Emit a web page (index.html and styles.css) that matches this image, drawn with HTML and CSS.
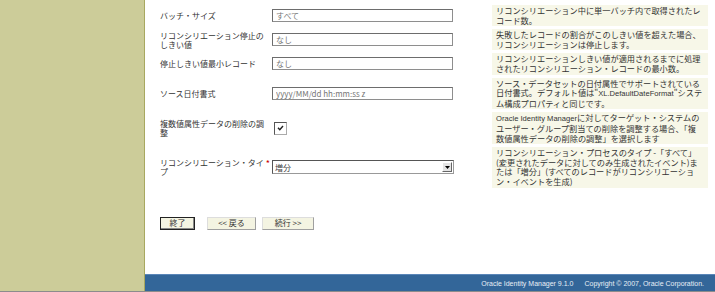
FILE: index.html
```html
<!DOCTYPE html>
<html lang="ja">
<head>
<meta charset="utf-8">
<link rel="stylesheet" href="styles.css">
</head>
<body>
<div class="page">
  <aside class="sidebar"></aside>
  <main class="main">
    <div class="form">
      <div class="label">バッチ・サイズ</div>
      <div class="mark"></div>
      <div class="field"><input class="text" type="text" value="すべて"></div>
      <div class="desc">リコンシリエーション中に単一バッチ内で取得されたレ<br>コード数。</div>

      <div class="label">リコンシリエーション停止のしきい値</div>
      <div class="mark"></div>
      <div class="field"><input class="text" type="text" value="なし"></div>
      <div class="desc">失敗したレコードの割合がこのしきい値を超えた場合、<br>リコンシリエーションは停止します。</div>

      <div class="label">停止しきい値最小レコード</div>
      <div class="mark"></div>
      <div class="field"><input class="text" type="text" value="なし"></div>
      <div class="desc">リコンシリエーションしきい値が適用されるまでに処理<br>されたリコンシリエーション・レコードの最小数。</div>

      <div class="label">ソース日付書式</div>
      <div class="mark"></div>
      <div class="field"><input class="text" type="text" value="yyyy/MM/dd hh:mm:ss z"></div>
      <div class="desc">ソース・データセットの日付属性でサポートされている<br>日付書式。デフォルト値は"<span class="lat">XL.DefaultDateFormat</span>"システ<br>ム構成プロパティと同じです。</div>

      <div class="label">複数値属性データの削除の調整</div>
      <div class="mark"></div>
      <div class="field"><span class="check"><svg width="7" height="6" viewBox="0 0 7 6"><path d="M1 2.8 L2.8 4.8 L6 1" stroke="#222" stroke-width="1.4" fill="none"/></svg></span></div>
      <div class="desc"><span class="lat">Oracle Identity Manager</span>に対してターゲット・システムの<br>ユーザー・グループ割当ての削除を調整する場合、「複<br>数値属性データの削除の調整」を選択します</div>

      <div class="label">リコンシリエーション・タイプ</div>
      <div class="mark req">*</div>
      <div class="field"><span class="select"><span class="sel-val">増分</span><span class="sel-btn"><svg width="5" height="3" viewBox="0 0 5 3"><path d="M0 0 L5 0 L2.5 3 Z" fill="#000"/></svg></span></span></div>
      <div class="desc">リコンシリエーション・プロセスのタイプ -「すべて」<br>(変更されたデータに対してのみ生成されたイベント)ま<br>たは「増分」(すべてのレコードがリコンシリエーショ<br>ン・イベントを生成)</div>
    </div>
    <div class="buttons">
      <button class="btn btn-default" type="button">終了</button>
      <button class="btn btn-back" type="button">&lt;&lt; 戻る</button>
      <button class="btn btn-next" type="button">続行 &gt;&gt;</button>
    </div>
    <footer class="footer">
      <span>Oracle Identity Manager 9.1.0</span>
      <span>Copyright © 2007, Oracle Corporation.</span>
    </footer>
  </main>
</div>
</body>
</html>
```

FILE: styles.css
```css
html, body {
  margin: 0;
  padding: 0;
  background: #ffffff;
}
body {
  font-family: "Noto Sans CJK JP", "Liberation Sans", sans-serif;
  font-size: 8px;
  color: #333333;
}
.page {
  display: grid;
  grid-template-columns: 145px 1fr;
  height: 291px;
  border-bottom: 1px solid #8c8c8c;
}
.sidebar {
  background: #cccc99;
  border-right: 1px solid #a8a860;
}
.main {
  display: flex;
  flex-direction: column;
  min-height: 0;
}
.form {
  display: grid;
  grid-template-columns: 105px 6px 183px 218px;
  column-gap: 0;
  row-gap: 3px;
  padding: 5px 0 0 15px;
  align-items: center;
}
.form .desc {
  margin-left: 38px;
  width: 210px;
}
.label {
  line-height: 9px;
  color: #333333;
}
.req {
  color: #cc0000;
  font-size: 9px;
  line-height: 8px;
  margin-top: -6px;
  text-align: right;
  padding-right: 1px;
}
.field {
  display: flex;
  align-items: center;
}
.text {
  box-sizing: border-box;
  width: 181px;
  height: 13px;
  margin: 0 0 0 1px;
  padding: 0 3px;
  border: 1px solid #8e8e8e;
  border-top-color: #6d6d6d;
  border-left-color: #6d6d6d;
  font-family: "Noto Sans CJK JP", "Liberation Sans", sans-serif;
  font-size: 8px;
  color: #777777;
  background: #ffffff;
  outline: none;
}
.check {
  box-sizing: border-box;
  width: 13px;
  height: 13px;
  margin-left: 3px;
  border: 1px solid #555555;
  border-right-color: #aaaaaa;
  border-bottom-color: #aaaaaa;
  background: #ffffff;
  display: flex;
  align-items: center;
  justify-content: center;
}
.select {
  box-sizing: border-box;
  width: 183px;
  height: 14px;
  margin-left: 1px;
  border: 1px solid #555555;
  border-right-color: #999999;
  border-bottom-color: #999999;
  display: flex;
  align-items: center;
  justify-content: space-between;
  background: #ffffff;
}
.sel-val {
  padding-left: 2px;
  color: #444444;
}
.sel-btn {
  box-sizing: border-box;
  width: 10px;
  height: 10px;
  margin-right: 1px;
  background: #e4e4e4;
  border: 1px solid #ffffff;
  border-right-color: #666666;
  border-bottom-color: #666666;
  display: flex;
  align-items: center;
  justify-content: center;
}
.desc {
  box-sizing: content-box;
  background: #f7f7e8;
  padding: 1px 2px 1px 4px;
  font-size: 8.2px;
  line-height: 9.6px;
  color: #333333;
  white-space: nowrap;
}
.lat {
  font-family: "Liberation Sans", sans-serif;
  font-size: 7.6px;
}
.buttons {
  display: flex;
  gap: 6px;
  padding: 0 0 0 15px;
  margin-top: 29px;
  align-items: center;
}
.btn {
  box-sizing: border-box;
  height: 13px;
  margin: 0;
  padding: 0;
  font-family: "Noto Sans CJK JP", "Liberation Sans", sans-serif;
  font-size: 8px;
  line-height: 10px;
  color: #333333;
  background: #f4f4e2;
  border: 1px solid #a0a0a0;
  border-top-color: #dddddd;
  border-left-color: #dddddd;
}
.btn-default {
  width: 35px;
  border: 1px solid #222222;
  box-shadow: inset -1px -1px 0 #888888;
  margin-right: 6px;
}
.btn-back {
  width: 49px;
}
.btn-next {
  width: 52px;
}
.footer {
  margin-top: auto;
  height: 16px;
  background: #336699;
  border-top: 1px solid #5a86b8;
  color: #e8eef6;
  font-family: "Liberation Sans", sans-serif;
  font-size: 7px;
  display: flex;
  justify-content: flex-end;
  align-items: center;
  gap: 11px;
  padding-right: 11px;
}
```
